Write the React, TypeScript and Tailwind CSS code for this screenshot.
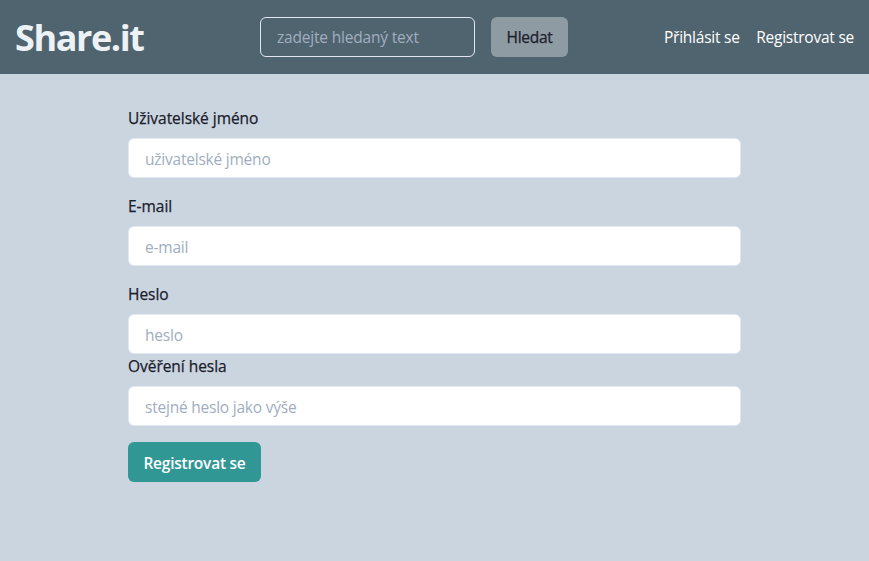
import React from "react";

type FieldProps = { label: string; placeholder: string; id: string; type?: string; className?: string };

function Field({ label, placeholder, id, type = "text", className = "" }: FieldProps) {
  return (
    <div className={className}>
      <label
        htmlFor={id}
        className="mb-2 block h-6 text-[15.5px] leading-6 tracking-[-0.04px] whitespace-nowrap text-[#1a202c] [-webkit-text-stroke:0.25px_#1a202c]"
      >
        {label}
      </label>
      <input
        id={id}
        type={type}
        placeholder={placeholder}
        className="block h-10 w-full rounded-md border border-[#e2e8f0] bg-white px-4 pt-0.5 text-[15.5px] tracking-[-0.22px] outline-none placeholder:text-[#a0aec0]"
      />
    </div>
  );
}

export default function App() {
  return (
    <div className="min-h-screen bg-[#cbd5e0] font-['Open_Sans','Noto_Sans',sans-serif] text-[#1a202c]">
      <header className="flex h-[74px] items-center justify-between bg-[#50646f] px-[15px] text-white">
        <h1 className="w-[129px] pt-0.5 text-[36px] font-bold leading-none tracking-[-1.4px] whitespace-nowrap text-[#edf2f7]">Share.it</h1>
        <form className="ml-5 flex gap-4">
          <input
            placeholder="zadejte hledaný text"
            className="h-10 w-[215px] rounded-md border border-[#e2e8f0] bg-transparent px-4 text-[15.5px] tracking-[-0.19px] outline-none placeholder:text-[#a0aec0]"
          />
          <button type="button" className="h-10 w-[77px] rounded-md bg-[#8f9ba2] pt-0.5 text-[15.5px] tracking-[-0.3px] text-[#1a202c] [-webkit-text-stroke:0.25px_#1a202c]">
            Hledat
          </button>
        </form>
        <nav className="flex w-[190px] justify-between pt-0.5 text-[15.5px] tracking-[-0.24px] whitespace-nowrap">
          <a>Přihlásit se</a>
          <a>Registrovat se</a>
        </nav>
      </header>
      <main className="mx-auto w-[613px] pt-8">
        <form>
          <Field id="username" label="Uživatelské jméno" placeholder="uživatelské jméno" className="mb-4" />
          <Field id="email" label="E-mail" placeholder="e-mail" className="mb-4" />
          <Field id="password" label="Heslo" placeholder="heslo" type="password" />
          <Field id="confirm" label="Ověření hesla" placeholder="stejné heslo jako výše" type="password" />
          <button
            type="button"
            className="mt-4 h-10 w-[133px] rounded-md bg-[#319795] pt-1 text-[15.5px] font-semibold tracking-[-0.24px] whitespace-nowrap text-white"
          >
            Registrovat se
          </button>
        </form>
      </main>
    </div>
  );
}
